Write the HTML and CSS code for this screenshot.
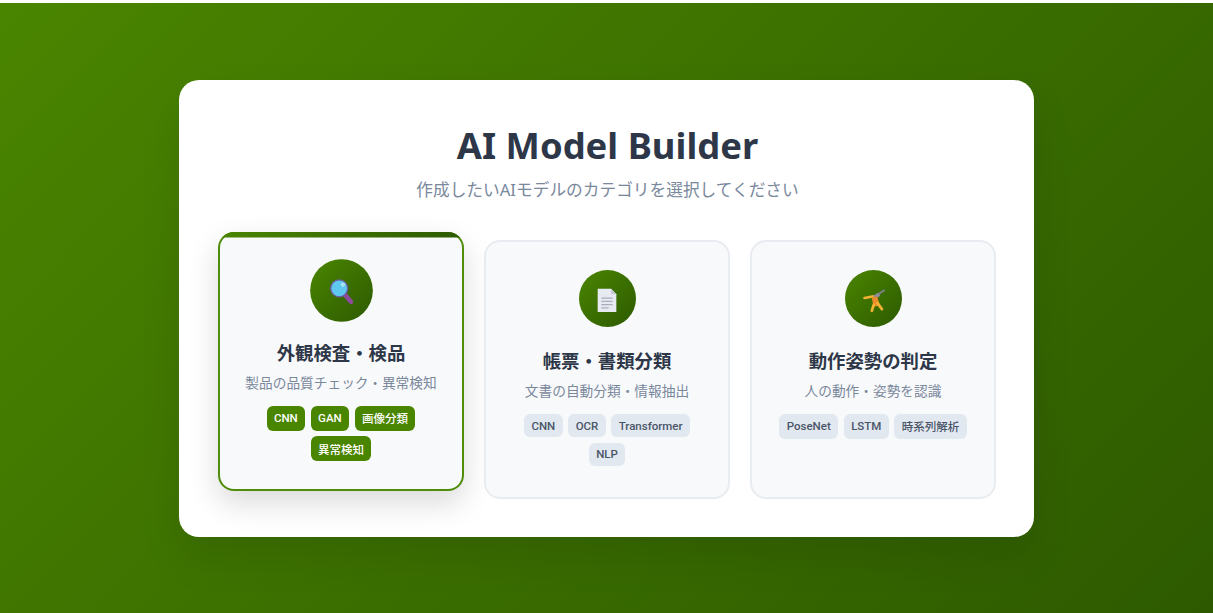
FILE: index.html
```html
<!DOCTYPE html>
<html lang="ja">
<head>
<meta charset="utf-8">
<title>AI Model Builder</title>
<link rel="stylesheet" href="styles.css">
</head>
<body>
<main class="panel">
  <h1 class="title">AI Model Builder</h1>
  <p class="subtitle">作成したいAIモデルのカテゴリを選択してください</p>
  <div class="grid">
    <section class="card selected">
      <div class="icon">
        <svg class="glyph" viewBox="0 0 32 32">
          <path d="M20 21 L26 28" stroke="#8e4b9e" stroke-width="5" stroke-linecap="round"/>
          <circle cx="12.8" cy="13" r="9.500" fill="#5fc8ee" stroke="#6f5aa8" stroke-width="1.400"/>
          <circle cx="17" cy="8.800" r="2.500" fill="#a6e2f5"/>
        </svg>
      </div>
      <h2 class="name">外観検査・検品</h2>
      <p class="desc">製品の品質チェック・異常検知</p>
      <div class="tags">
        <span class="tag tall">CNN</span><span class="tag tall">GAN</span><span class="tag tall">画像分類</span><span class="tag tall">異常検知</span>
      </div>
    </section>
    <section class="card">
      <div class="icon">
        <svg class="glyph" viewBox="0 0 32 32">
          <path d="M4.500 3.500 H21 L27.500 10 V32 H4.500 Z" fill="#e8eaf2"/>
          <path d="M21 3.500 L27.500 10 H21 Z" fill="#c5c9d6"/>
          <path d="M9 15 H23 M9 19 H23 M9 23 H23 M9 27 H18" stroke="#a9aebd" stroke-width="1.400"/>
        </svg>
      </div>
      <h2 class="name">帳票・書類分類</h2>
      <p class="desc">文書の自動分類・情報抽出</p>
      <div class="tags">
        <span class="tag">CNN</span><span class="tag">OCR</span><span class="tag">Transformer</span><span class="tag">NLP</span>
      </div>
    </section>
    <section class="card">
      <div class="icon">
        <svg class="glyph" viewBox="0 0 32 32">
          <path d="M21 11 L29.500 5.500" stroke="#7d7f88" stroke-width="2.400" stroke-linecap="round"/>
          <path d="M5.500 14.800 L17 12.700" stroke="#f2b233" stroke-width="3.200" stroke-linecap="round"/>
          <path d="M16 12 L22.500 8 L25 12 L19 16 Z" fill="#8d8f98"/>
          <path d="M14.500 14 L21 13 L24.500 24 L16.500 25.500 Z" fill="#ef8a2c"/>
          <path d="M17 23 L14.500 30.500 M21.500 21 L27 28.500" stroke="#f2b233" stroke-width="3.400" stroke-linecap="round"/>
        </svg>
      </div>
      <h2 class="name">動作姿勢の判定</h2>
      <p class="desc">人の動作・姿勢を認識</p>
      <div class="tags">
        <span class="tag tall">PoseNet</span><span class="tag tall">LSTM</span><span class="tag tall">時系列解析</span>
      </div>
    </section>
  </div>
</main>
</body>
</html>
```
FILE: styles.css
```css
* { box-sizing: border-box; }
html { background: #fff; height: 100%; }
body {
  margin: 3px 0 0;
  height: 610px;
  overflow: hidden;
  background: linear-gradient(135deg, #4a8500 0%, #2d5a00 100%);
  font-family: "Noto Sans", "Noto Sans CJK JP", sans-serif;
  display: flex;
  align-items: flex-start;
  justify-content: center;
}
.panel {
  width: 855px;
  height: 457px;
  margin-top: 77px;
  background: #fff;
  border-radius: 20px;
  padding: 38px 37px 0 39px;
  box-shadow: 0 20px 40px rgba(0, 0, 0, .1);
  text-align: center;
}
.title {
  margin: 0;
  font-size: 36.4px;
  line-height: 54px;
  font-weight: 700;
  color: #2d3748;
}
.subtitle {
  margin: 6px 0 0;
  font-size: 16.7px;
  line-height: 24px;
  color: #7a889c;
}
.grid {
  display: grid;
  grid-template-columns: repeat(3, 246px);
  gap: 20px;
  margin-top: 38px;
}
.card {
  position: relative;
  height: 258.5px;
  padding: 28px 24px 0;
  background: #f8f9fb;
  border: 2px solid #e8ecf1;
  border-radius: 16px;
  display: flex;
  flex-direction: column;
  align-items: center;
}
.card.selected {
  transform: translateY(-8px);
  border-color: #4f8c0a;
  box-shadow: 0 12px 30px rgba(0, 0, 0, .15);
}
.card.selected::before {
  content: "";
  position: absolute;
  left: -2px;
  right: -2px;
  top: -2px;
  height: 16px;
  border-radius: 16px 16px 0 0;
  clip-path: inset(0 0 10.5px 0);
  background: linear-gradient(90deg, #4a8500, #2d5a00);
}
.icon {
  width: 57px;
  height: 57px;
  flex: none;
  border-radius: 50%;
  background: linear-gradient(135deg, #4a8500, #2d5a00);
  display: flex;
  align-items: center;
  justify-content: center;
}
.selected .icon { transform: scale(1.1); }
.glyph { width: 26px; height: 26px; overflow: visible; }
.name {
  margin: 21px 0 0;
  font-size: 18.4px;
  line-height: 26px;
  font-weight: 700;
  color: #2d3748;
}
.desc {
  margin: 7px 0 0;
  font-size: 13.7px;
  line-height: 20px;
  color: #7a889c;
  white-space: nowrap;
}
.tags {
  margin-top: 13px;
  display: flex;
  flex-wrap: wrap;
  justify-content: center;
  gap: 5.8px;
}
.tag {
  display: flex;
  align-items: center;
  padding: 0 7.3px;
  height: 23px;
  font-family: "Roboto", "Noto Sans CJK JP", sans-serif;
  font-size: 11.5px;
  font-weight: 500;
  border-radius: 6px;
  background: #e2e8f0;
  color: #4a5568;
}
.tag.tall { height: 24.5px; }
.selected .tag { background: #4a8500; color: #fff; }
```
